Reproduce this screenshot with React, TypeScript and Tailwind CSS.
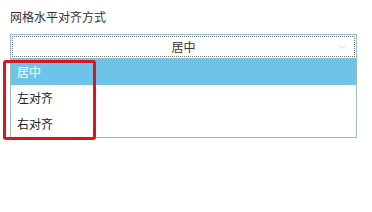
import { ChevronDown } from "lucide-react";

const options = ["居中", "左对齐", "右对齐"];

export default function App() {
  return (
    <div
      className="relative h-[212px] w-[372px] bg-white text-[12px] text-[#333]"
      style={{ fontFamily: '"Microsoft YaHei", "Noto Sans CJK SC", sans-serif' }}
    >
      <div className="px-[10px] pt-[9px]">
        <div className="h-[16px] leading-[16px]">网格水平对齐方式</div>

        {/* select */}
        <div className="mt-[9px] w-[347px] border border-[#8cc3d3] bg-white p-[1px]">
          <div className="relative flex h-[21px] items-center justify-center border border-dotted border-[#777] bg-[#fdfefe]">
            <span>居中</span>
            <ChevronDown className="absolute right-[6px] h-[12px] w-[12px] text-[#c4cdd2]" strokeWidth={1.5} />
          </div>
        </div>

        {/* list */}
        <div className="w-[347px] border border-t-0 border-[#9fb7bd] bg-white">
          {options.map((o, i) => (
            <div
              key={o}
              className={`flex h-[26px] items-center pl-[6px] ${
                i === 0 ? "bg-[#6ec4e8] text-white" : "text-[#222]"
              }`}
            >
              {o}
            </div>
          ))}
        </div>
      </div>

      {/* annotation */}
      <div className="absolute left-[3px] top-[60px] h-[80px] w-[93px] rounded-[3px] border-[3px] border-[#d8161e]" />
    </div>
  );
}
